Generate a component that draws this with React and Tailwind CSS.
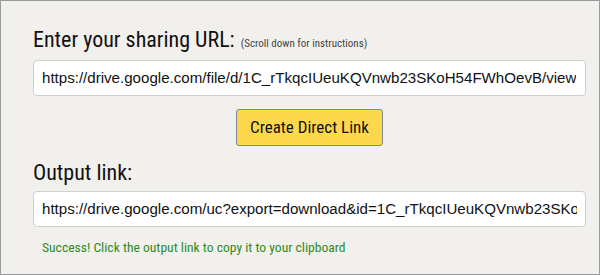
export default function App() {
  const cond = { fontFamily: '"Roboto Condensed", "Liberation Sans Narrow", "DejaVu Sans Condensed", Roboto, sans-serif' };
  const mono = { fontFamily: '"Liberation Sans", Arial, sans-serif' };
  return (
    <div className="w-[600px] h-[275px] bg-[#f2f0ed] border border-[#9a9a9a] pl-[32px] pr-[13px] pt-[26px]">
      <div className="flex items-baseline gap-[6px]" style={cond}>
        <h2 className="text-[22px] text-[#111] leading-[26px]">Enter your sharing URL:</h2>
        <span className="text-[11px] text-[#444]">(Scroll down for instructions)</span>
      </div>
      <div className="mt-[7px] h-[36px] bg-white border border-[#cfcfcf] rounded-[4px] flex items-center px-[8px]">
        <div className="overflow-hidden whitespace-nowrap text-[15.1px] text-[#111]" style={mono}>
          https://drive.google.com/file/d/1C_rTkqcIUeuKQVnwb23SKoH54FWhOevB/view
        </div>
      </div>
      <div className="flex justify-center mt-[13px]">
        <button className="w-[147px] h-[37px] bg-[#fdd84c] border border-[#7d8a97] rounded-[3px] text-[17px] text-[#111]" style={cond}>
          Create Direct Link
        </button>
      </div>
      <h2 className="mt-[14px] text-[22px] text-[#111] leading-[26px]" style={cond}>Output link:</h2>
      <div className="mt-[5px] h-[36px] bg-white border border-[#cfcfcf] rounded-[4px] flex items-center px-[8px]">
        <div className="overflow-hidden whitespace-nowrap text-[15.1px] text-[#111]" style={mono}>
          https://drive.google.com/uc?export=download&amp;id=1C_rTkqcIUeuKQVnwb23SKoH54FWhOevB
        </div>
      </div>
      <p className="mt-[10px] pl-[9px] text-[13.6px] text-[#2f8a1f]" style={cond}>
        Success! Click the output link to copy it to your clipboard
      </p>
    </div>
  );
}
